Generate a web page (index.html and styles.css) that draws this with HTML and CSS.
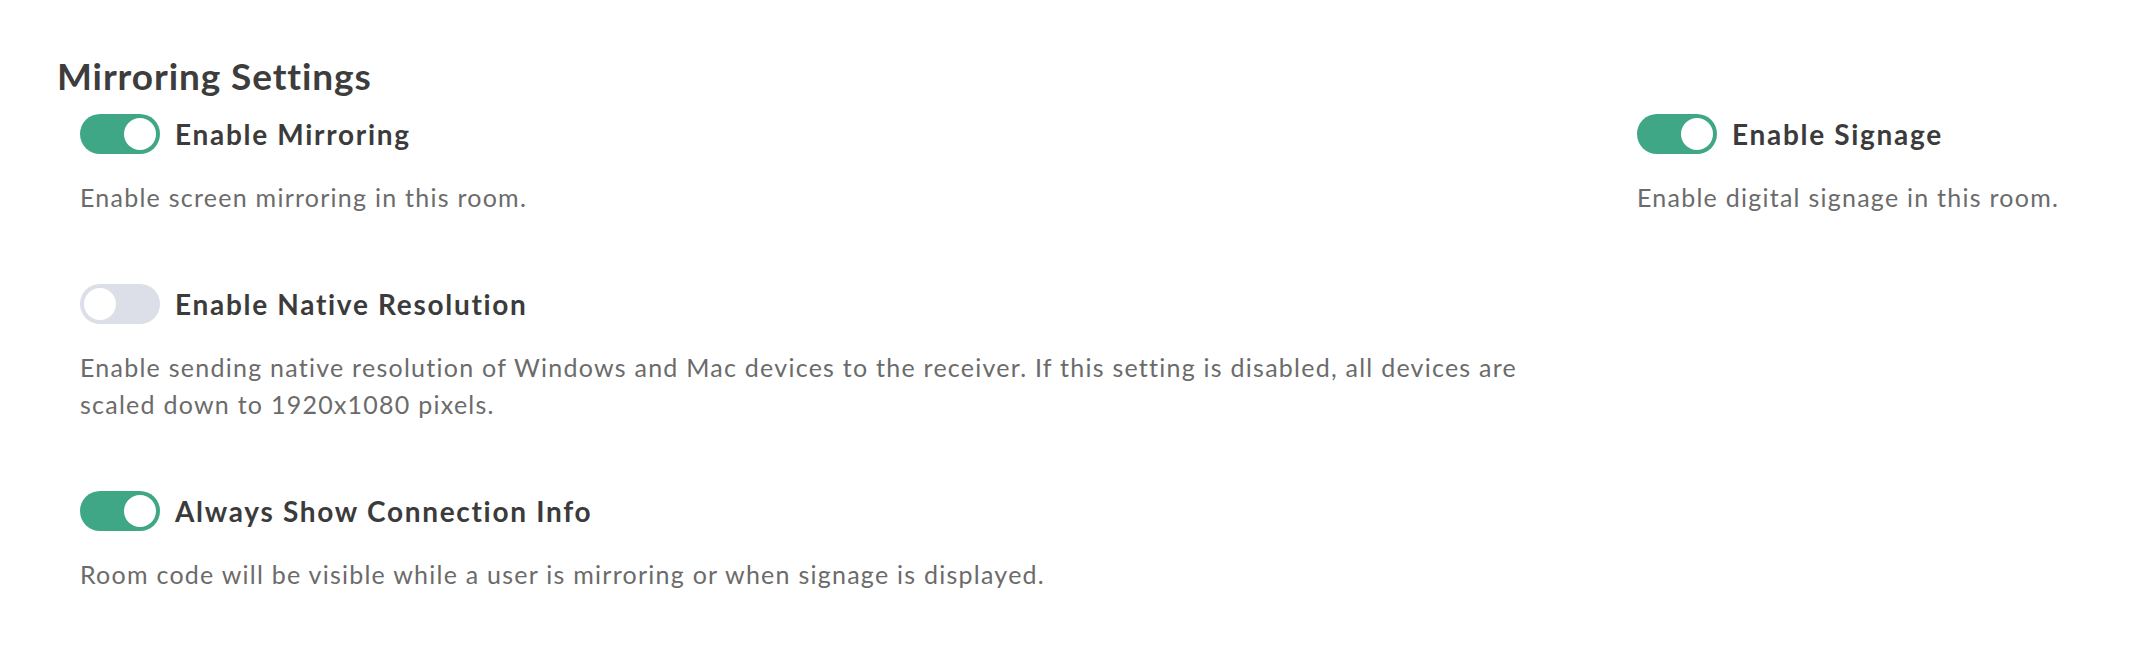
FILE: index.html
```html
<!DOCTYPE html>
<html lang="en">
<head>
<meta charset="utf-8">
<title>Mirroring Settings</title>
<link rel="stylesheet" href="styles.css">
</head>
<body>
<main class="page">
  <h1 class="title">Mirroring Settings</h1>
  <div class="columns">
    <div class="col col-left">
      <section class="setting">
        <div class="setting-head">
          <span class="toggle on"><span class="knob"></span></span>
          <span class="label">Enable Mirroring</span>
        </div>
        <p class="desc">Enable screen mirroring in this room.</p>
      </section>
      <section class="setting">
        <div class="setting-head">
          <span class="toggle off"><span class="knob"></span></span>
          <span class="label">Enable Native Resolution</span>
        </div>
        <p class="desc">Enable sending native resolution of Windows and Mac devices to the receiver. If this setting is disabled, all devices are scaled down to 1920x1080 pixels.</p>
      </section>
      <section class="setting">
        <div class="setting-head">
          <span class="toggle on"><span class="knob"></span></span>
          <span class="label">Always Show Connection Info</span>
        </div>
        <p class="desc">Room code will be visible while a user is mirroring or when signage is displayed.</p>
      </section>
    </div>
    <div class="col col-right">
      <section class="setting">
        <div class="setting-head">
          <span class="toggle on"><span class="knob"></span></span>
          <span class="label">Enable Signage</span>
        </div>
        <p class="desc">Enable digital signage in this room.</p>
      </section>
    </div>
  </div>
</main>
</body>
</html>
```

FILE: styles.css
```css
html, body {
  margin: 0;
  padding: 0;
  background: #ffffff;
}

body {
  font-family: "Lato", "Liberation Sans", sans-serif;
  color: #3b3b3b;
}

.page {
  padding: 54px 0 0 57px;
}

.title {
  margin: 0;
  font-size: 37px;
  line-height: 44px;
  font-weight: 700;
  letter-spacing: 0.9px;
  color: #3d3d3d;
}

.columns {
  display: grid;
  grid-template-columns: 1557px 1fr;
  padding-left: 23px;
  margin-top: 16px;
}

.col {
  display: flex;
  flex-direction: column;
  gap: 68px;
}

.col-left .desc {
  max-width: 1470px;
}

.setting {
  display: flex;
  flex-direction: column;
  gap: 25px;
}

.setting-head {
  display: flex;
  align-items: center;
  gap: 15px;
}

.toggle {
  box-sizing: border-box;
  width: 80px;
  height: 40px;
  border-radius: 20px;
  padding: 4px;
  display: flex;
  flex: none;
}

.toggle.on {
  background: #40a786;
  justify-content: flex-end;
}

.toggle.off {
  background: #dcdfe7;
  justify-content: flex-start;
}

.knob {
  width: 32px;
  height: 32px;
  border-radius: 50%;
  background: #ffffff;
}

.label {
  font-size: 28px;
  line-height: 40px;
  font-weight: 700;
  letter-spacing: 1.7px;
  color: #3b3b3b;
}

.desc {
  margin: 0;
  font-size: 25px;
  line-height: 37px;
  letter-spacing: 1.25px;
  color: #6b6b6b;
}
```
